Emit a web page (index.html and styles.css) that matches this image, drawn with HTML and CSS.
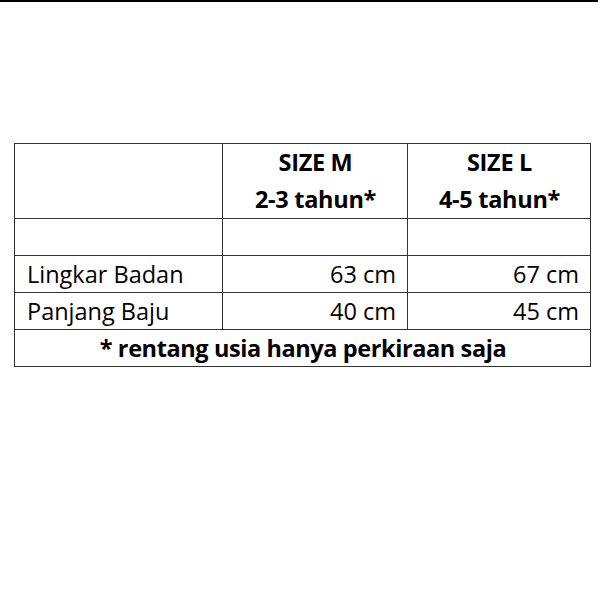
FILE: index.html
```html
<!DOCTYPE html>
<html>
<head>
<meta charset="utf-8">
<link rel="stylesheet" href="styles.css">
</head>
<body>
<div class="topline"></div>
<table class="size-table">
  <tr class="head">
    <td class="label"></td>
    <td class="size">SIZE M<br>2-3 tahun*</td>
    <td class="size">SIZE L<br>4-5 tahun*</td>
  </tr>
  <tr class="row">
    <td></td><td></td><td></td>
  </tr>
  <tr class="row">
    <td class="label">Lingkar Badan</td>
    <td class="num">63 cm</td>
    <td class="num">67 cm</td>
  </tr>
  <tr class="row">
    <td class="label">Panjang Baju</td>
    <td class="num">40 cm</td>
    <td class="num">45 cm</td>
  </tr>
  <tr class="row">
    <td class="note" colspan="3">* rentang usia hanya perkiraan saja</td>
  </tr>
</table>
</body>
</html>
```
FILE: styles.css
```css
html, body {
  margin: 0;
  padding: 0;
  background: #fff;
}
body {
  width: 600px;
  height: 600px;
  font-family: "Open Sans", "Liberation Sans", sans-serif;
  color: #000;
}
.topline {
  height: 2px;
  width: 598px;
  background: #000;
}
.size-table {
  border-collapse: collapse;
  margin: 141px 0 0 14px;
  width: 577px;
  font-size: 23.5px;
  table-layout: fixed;
}
.size-table td {
  border: 1px solid #333;
  padding: 0 11px 0 12px;
  height: 37px;
  line-height: 36px;
  box-sizing: border-box;
  white-space: nowrap;
}
.size-table td:nth-child(1) { width: 208px; }
.size-table td:nth-child(2) { width: 185px; }
.head td { height: 74px; }
.size {
  text-align: center;
  font-weight: bold;
  letter-spacing: -0.3px;
  line-height: 37px !important;
}
.label { text-align: left; }
.num { text-align: right; }
.note {
  text-align: center;
  font-weight: bold;
  letter-spacing: -0.4px;
}
```
